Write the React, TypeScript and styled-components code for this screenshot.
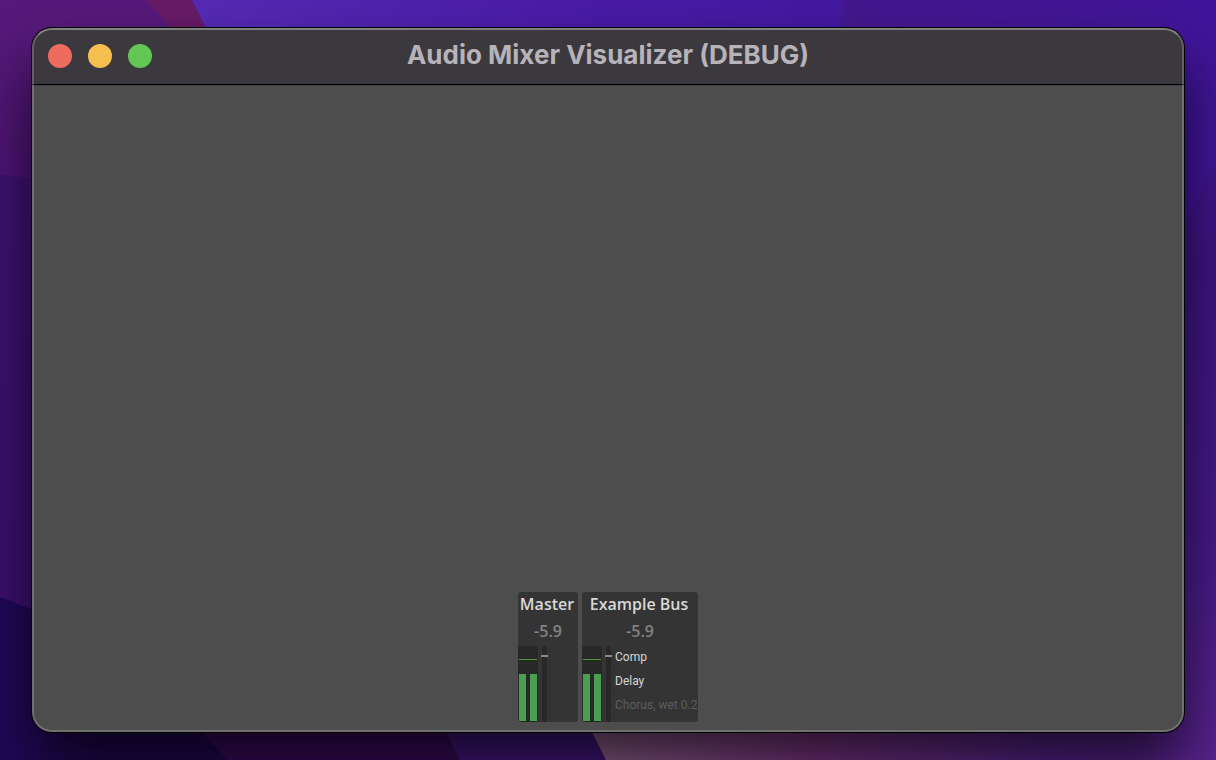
import React from "react";
import styled, { createGlobalStyle } from "styled-components";

const GlobalStyle = createGlobalStyle`
  *, *::before, *::after { box-sizing: border-box; }
  body {
    margin: 0;
    background: #2a0a58;
    font-family: "Open Sans", "Noto Sans", sans-serif;
  }
`;

const Desktop = styled.div`
  position: relative;
  display: flex;
  min-height: 100vh;
  padding: 28px 32px;
  overflow: hidden;
`;

const WallpaperArt = styled.svg`
  position: absolute;
  inset: 0;
  width: 100%;
  height: 100%;
`;

const Window = styled.section`
  position: relative;
  display: flex;
  flex: 1;
  flex-direction: column;
  overflow: hidden;
  border-radius: 20px;
  background: #4d4d4d;
  box-shadow: 0 0 0 1px #000, 0 36px 60px rgba(0, 0, 0, 0.7);

  &::after {
    content: "";
    position: absolute;
    inset: 0;
    border: 2px solid rgba(255, 255, 255, 0.2);
    border-top-color: rgba(255, 255, 255, 0.36);
    border-radius: 20px;
    pointer-events: none;
  }
`;

const TitleBar = styled.header`
  display: grid;
  grid-template-columns: 1fr auto 1fr;
  align-items: center;
  height: 57px;
  padding: 0 16px;
  border-bottom: 1px solid #000;
  background: #3c393e;
  box-shadow: 0 1px 0 #424242;
`;

const WindowControls = styled.div`
  display: flex;
  gap: 16px;
`;

const ControlButton = styled.button<{ $color: string }>`
  width: 24px;
  height: 24px;
  padding: 0;
  border: 0;
  border-radius: 50%;
  background: ${(p) => p.$color};
`;

const Title = styled.h1`
  margin: 0;
  color: #b6b3b9;
  font: 700 26px/54px Inter, sans-serif;
  height: 56px;
  white-space: nowrap;
`;

const Mixer = styled.main`
  display: flex;
  flex: 1;
  align-items: flex-end;
  justify-content: center;
  gap: 4px;
  padding: 10px;
`;

const Bus = styled.article<{ $width: number }>`
  width: ${(p) => p.$width}px;
  overflow: hidden;
  border-radius: 3px;
  background: #343434;
`;

const BusName = styled.h2`
  margin: 0;
  padding-right: 2px;
  color: #d8d8d8;
  font-size: 16px;
  font-weight: 600;
  line-height: 24px;
  text-align: center;
  white-space: nowrap;
`;

const Volume = styled.output`
  display: block;
  padding: 4px 0 3px;
  color: #828282;
  font-size: 16px;
  font-weight: 600;
  line-height: 23px;
  text-align: center;
`;

const BusBody = styled.div`
  display: flex;
  gap: 3px;
  height: 76px;
`;

const LevelMeter = styled.div`
  position: relative;
  display: flex;
  flex: none;
  align-items: flex-end;
  justify-content: space-between;
  width: 20px;
  padding: 0 1px 1px;
  border-radius: 3px;
  background: #282828;
`;

const LevelBar = styled.span`
  width: 7px;
  background: #4b9f51;
`;

const PeakLine = styled.span`
  position: absolute;
  top: 13px;
  left: 1px;
  right: 1px;
  height: 1px;
  background: #4b9a35;
`;

const Fader = styled.input`
  appearance: none;
  writing-mode: vertical-lr;
  direction: rtl;
  flex: none;
  width: 7px;
  height: 76px;
  margin: 0;
  background: transparent;

  &::-webkit-slider-runnable-track {
    width: 7px;
    height: 76px;
    border: solid transparent;
    border-width: 0 1px;
    border-radius: 3px;
    background: linear-gradient(#282828, #282828) padding-box;
  }

  &::-webkit-slider-thumb {
    appearance: none;
    width: 7px;
    height: 2px;
    margin-left: -1px;
    border: 0;
    border-radius: 0;
    background: #8c8c8c;
  }
`;

const EffectList = styled.ul`
  flex: none;
  margin: 0;
  padding: 0;
  list-style: none;
`;

const Effect = styled.li<{ $disabled?: boolean }>`
  height: 24px;
  color: ${(p) => (p.$disabled ? "#5d5d5d" : "#d6d6d6")};
  font: 12px/22px Roboto, sans-serif;
  white-space: nowrap;
`;

type EffectInfo = { name: string; disabled?: boolean };
type BusInfo = {
  name: string;
  width: number;
  volume: number;
  levels: number[];
  effects: EffectInfo[];
};

const buses: BusInfo[] = [
  { name: "Master", width: 60, volume: -5.9, levels: [63, 63], effects: [] },
  {
    name: "Example Bus",
    width: 116,
    volume: -5.9,
    levels: [63, 63],
    effects: [
      { name: "Comp" },
      { name: "Delay" },
      { name: "Chorus, wet 0.2", disabled: true },
    ],
  },
];

const controls = [
  { label: "Close", color: "#ed6b5f" },
  { label: "Minimize", color: "#f5bf4f" },
  { label: "Zoom", color: "#62c655" },
];

function Wallpaper() {
  return (
    <WallpaperArt viewBox="0 0 1216 760" preserveAspectRatio="none" aria-hidden="true">
      <defs>
        <linearGradient id="left" x1="0" y1="0" x2="0" y2="1">
          <stop offset="0" stopColor="#581a7a" />
          <stop offset="1" stopColor="#4e1478" />
        </linearGradient>
        <linearGradient id="leftLow" x1="0" y1="0" x2="0" y2="1">
          <stop offset="0" stopColor="#401274" />
          <stop offset="1" stopColor="#3c0e70" />
        </linearGradient>
        <linearGradient id="top" x1="0" y1="0" x2="1" y2="0">
          <stop offset="0" stopColor="#552bb4" />
          <stop offset="0.35" stopColor="#4b1ca8" />
          <stop offset="0.63" stopColor="#4319a0" />
          <stop offset="0.64" stopColor="#44178e" />
          <stop offset="1" stopColor="#41159a" />
        </linearGradient>
        <linearGradient id="right" gradientUnits="userSpaceOnUse" x1="0" y1="60" x2="0" y2="760">
          <stop offset="0" stopColor="#41159a" />
          <stop offset="0.3" stopColor="#3e1584" />
          <stop offset="0.7" stopColor="#481a8c" />
          <stop offset="1" stopColor="#5a2490" />
        </linearGradient>
        <linearGradient id="bottom" x1="0" y1="0" x2="1" y2="0">
          <stop offset="0" stopColor="#a0709c" />
          <stop offset="0.4" stopColor="#883a90" />
          <stop offset="0.8" stopColor="#5c2698" />
          <stop offset="1" stopColor="#5a2490" />
        </linearGradient>
      </defs>
      <path d="M0 0H220V180H0Z" fill="url(#left)" />
      <path d="M0 174L220 205V760H0Z" fill="url(#leftLow)" />
      <path d="M145 0H192L220 56L190 45Z" fill="#661b66" />
      <path d="M192 0H1216V300H342Z" fill="url(#top)" />
      <path d="M1100 60H1216V760H1100Z" fill="url(#right)" />
      <path d="M1216 165L1130 320V28H1216Z" fill="#40159a" />
      <path d="M0 597L120 644L260 760H0Z" fill="#22085a" />
      <path d="M190 718H600V760H227Z" fill="#3e0c64" />
      <path d="M430 700H590L620 760H460Z" fill="#48188a" />
      <path d="M576 700H1160V760H606Z" fill="url(#bottom)" />
    </WallpaperArt>
  );
}

function BusStrip({ bus }: { bus: BusInfo }) {
  return (
    <Bus $width={bus.width}>
      <BusName>{bus.name}</BusName>
      <Volume>{bus.volume.toFixed(1)}</Volume>
      <BusBody>
        <LevelMeter role="img" aria-label={`${bus.name} level`}>
          <PeakLine />
          {bus.levels.map((level, i) => (
            <LevelBar key={i} style={{ height: `${level}%` }} />
          ))}
        </LevelMeter>
        <Fader
          type="range"
          aria-label={`${bus.name} volume`}
          min={-48}
          max={0}
          step={0.1}
          defaultValue={bus.volume}
        />
        <EffectList>
          {bus.effects.map((effect) => (
            <Effect key={effect.name} $disabled={effect.disabled}>
              {effect.name}
            </Effect>
          ))}
        </EffectList>
      </BusBody>
    </Bus>
  );
}

export default function App() {
  return (
    <>
      <GlobalStyle />
      <Desktop>
        <Wallpaper />
        <Window>
          <TitleBar>
            <WindowControls>
              {controls.map((c) => (
                <ControlButton key={c.label} type="button" aria-label={c.label} $color={c.color} />
              ))}
            </WindowControls>
            <Title>Audio Mixer Visualizer (DEBUG)</Title>
          </TitleBar>
          <Mixer>
            {buses.map((bus) => (
              <BusStrip key={bus.name} bus={bus} />
            ))}
          </Mixer>
        </Window>
      </Desktop>
    </>
  );
}
